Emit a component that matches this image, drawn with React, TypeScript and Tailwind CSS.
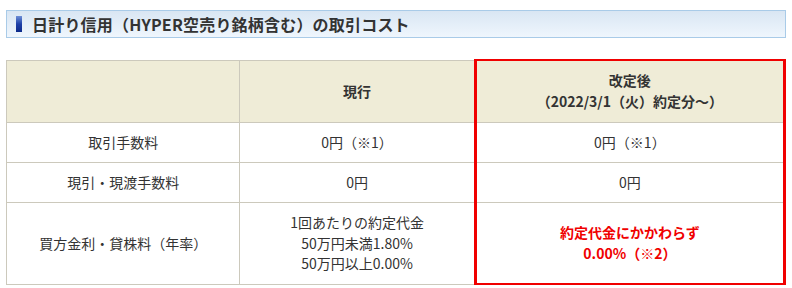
import React from "react";

const font = { fontFamily: '"Noto Sans CJK JP", "Noto Sans", sans-serif' };

export default function App() {
  const cell = "border border-[#ccc9bc] text-center align-middle";
  const red = "border-x-[3px] border-x-[#f00000]";
  return (
    <div className="w-[792px] h-[288px] bg-white text-[#333]" style={font}>
      <div className="pt-[10px] px-[6px]">
        <div className="h-[28px] border border-[#a9cbe8] bg-gradient-to-b from-[#d9e6f3] to-[#eff6fd] flex items-center pl-[9px]">
          <div className="w-[6px] h-[16px] bg-gradient-to-b from-[#6f8fd6] via-[#1e3fa8] to-[#0b2a8a] mr-[10px]" />
          <span className="text-[16px] font-bold leading-none text-[#333] tracking-[0.2px]">
            日計り信用（HYPER空売り銘柄含む）の取引コスト
          </span>
        </div>
      </div>
      <div className="px-[6px] pt-[21px]">
        <table className="w-[780px] border-collapse text-[14px]">
          <colgroup>
            <col className="w-[234px]" />
            <col className="w-[236px]" />
            <col className="w-[310px]" />
          </colgroup>
          <tbody>
            <tr className="h-[62px] bg-[#efecd7]">
              <td className={cell}></td>
              <td className={`${cell} font-bold`}>現行</td>
              <td className={`${cell} ${red} border-t-2 border-t-[#f00000] font-bold leading-[21px]`}>
                改定後
                <br />
                （2022/3/1（火）約定分〜）
              </td>
            </tr>
            <tr className="h-[40px]">
              <td className={cell}>取引手数料</td>
              <td className={cell}>0円（※1）</td>
              <td className={`${cell} ${red}`}>0円（※1）</td>
            </tr>
            <tr className="h-[40px]">
              <td className={cell}>現引・現渡手数料</td>
              <td className={cell}>0円</td>
              <td className={`${cell} ${red}`}>0円</td>
            </tr>
            <tr className="h-[82px]">
              <td className={cell}>買方金利・貸株料（年率）</td>
              <td className={`${cell} leading-[20.5px]`}>
                1回あたりの約定代金
                <br />
                50万円未満1.80%
                <br />
                50万円以上0.00%
              </td>
              <td className={`${cell} ${red} border-b-2 border-b-[#f00000] text-[#f00000] font-bold leading-[21px]`}>
                約定代金にかかわらず
                <br />
                0.00%（※2）
              </td>
            </tr>
          </tbody>
        </table>
      </div>
    </div>
  );
}
